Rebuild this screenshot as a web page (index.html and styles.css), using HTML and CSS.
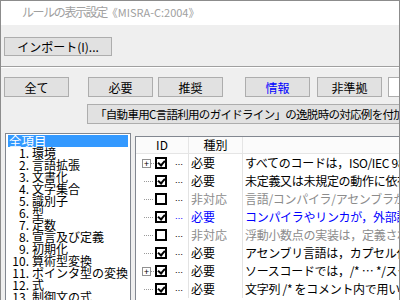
FILE: index.html
```html
<!DOCTYPE html>
<html lang="ja">
<head>
  <meta charset="UTF-8">
  <title>ルールの表示設定</title>
  <link rel="stylesheet" href="styles.css">
</head>
<body>
  <div class="window">
    <!-- Title bar -->
    <div class="titlebar">
      <span class="title-jp">ルールの表示設定</span><span class="title-en">《MISRA-C:2004》</span>
    </div>

    <div class="content">
      <!-- Import -->
      <div class="toolbar">
        <button class="btn btn-import">インポート(I)...</button>
      </div>
      <div class="separator"></div>

      <!-- Filter buttons -->
      <div class="filters">
        <button class="btn btn-filter">全て</button>
        <button class="btn btn-filter gap-wide">必要</button>
        <button class="btn btn-filter gap-small">推奨</button>
        <button class="btn btn-filter btn-info gap-wide">情報</button>
        <button class="btn btn-filter gap-small">非準拠</button>
        <div class="search"></div>
      </div>
      <div class="guide-row">
        <button class="btn btn-guide">「自動車用C言語利用のガイドライン」の逸脱時の対応例を付加する</button>
      </div>

      <!-- Main area -->
      <div class="main">
        <ul class="chapters">
          <li class="selected"><span class="label">全項目</span></li>
          <li><span class="num">1.</span>環境</li>
          <li><span class="num">2.</span>言語拡張</li>
          <li><span class="num">3.</span>文書化</li>
          <li><span class="num">4.</span>文字集合</li>
          <li><span class="num">5.</span>識別子</li>
          <li><span class="num">6.</span>型</li>
          <li><span class="num">7.</span>定数</li>
          <li><span class="num">8.</span>宣言及び定義</li>
          <li><span class="num">9.</span>初期化</li>
          <li><span class="num">10.</span>算術型変換</li>
          <li><span class="num">11.</span>ポインタ型の変換</li>
          <li><span class="num">12.</span>式</li>
          <li><span class="num">13.</span>制御文の式</li>
        </ul>

        <div class="rules">
          <div class="rules-head">
            <div class="col-id">ID</div>
            <div class="col-kind">種別</div>
            <div class="col-desc"></div>
          </div>

          <div class="rule">
            <div class="col-id"><span class="expander">+</span><span class="tree-line short"></span><span class="check on"></span><span class="more">…</span></div>
            <div class="col-kind">必要</div>
            <div class="col-desc">すべてのコードは，ISO/IEC 9899:1990 に準拠しなければならない</div>
          </div>
          <div class="rule">
            <div class="col-id"><span class="tree-line"></span><span class="check on"></span><span class="more">…</span></div>
            <div class="col-kind">必要</div>
            <div class="col-desc">未定義又は未規定の動作に依存してはならない</div>
          </div>
          <div class="rule off">
            <div class="col-id"><span class="tree-line"></span><span class="check"></span><span class="more">…</span></div>
            <div class="col-kind">非対応</div>
            <div class="col-desc">言語/コンパイラ/アセンブラが準拠する規格を文書化</div>
          </div>
          <div class="rule info">
            <div class="col-id"><span class="tree-line"></span><span class="check on"></span><span class="more">…</span></div>
            <div class="col-kind">必要</div>
            <div class="col-desc">コンパイラやリンカが，外部識別子の有効文字数</div>
          </div>
          <div class="rule off">
            <div class="col-id"><span class="tree-line"></span><span class="check"></span><span class="more">…</span></div>
            <div class="col-kind">非対応</div>
            <div class="col-desc">浮動小数点の実装は，定義された規格に従うこと</div>
          </div>
          <div class="rule">
            <div class="col-id"><span class="tree-line"></span><span class="check on"></span><span class="more">…</span></div>
            <div class="col-kind">必要</div>
            <div class="col-desc">アセンブリ言語は，カプセル化して隔離すること</div>
          </div>
          <div class="rule">
            <div class="col-id"><span class="expander">+</span><span class="tree-line short"></span><span class="check on"></span><span class="more">…</span></div>
            <div class="col-kind">必要</div>
            <div class="col-desc">ソースコードでは，/* … */スタイルのコメントのみ</div>
          </div>
          <div class="rule">
            <div class="col-id"><span class="tree-line"></span><span class="check on"></span><span class="more">…</span></div>
            <div class="col-kind">必要</div>
            <div class="col-desc">文字列 /* をコメント内で用いてはならない</div>
          </div>
        </div>
      </div>
    </div>
  </div>
</body>
</html>
```

FILE: styles.css
```css
/* General Styles */
* {
  box-sizing: border-box;
}

body {
  margin: 0;
  font-family: "Noto Sans CJK JP", "Noto Sans", sans-serif;
  font-size: 12px;
  color: #000;
  background-color: #ffffff;
}

.window {
  width: 400px;
  height: 300px;
  overflow: hidden;
  border: 1px solid #8c8c8c;
  border-bottom: none;
  background-color: #efefef;
}

/* Title bar */
.titlebar {
  height: 24px;
  padding-left: 21px;
  background-color: #ffffff;
  color: #a0a0a0; /* Inactive title */
  font-size: 12px;
  line-height: 22px;
  white-space: nowrap;
}

.title-jp {
  letter-spacing: -1.4px;
}

.title-en {
  font-size: 11px;
}

/* Buttons */
.btn {
  display: block;
  margin: 0;
  padding: 0;
  height: 20px;
  font-family: inherit;
  font-size: 12px;
  line-height: 17px;
  color: #000;
  background-color: #e1e1e1;
  border: 1px solid #adadad;
  border-radius: 0;
  white-space: nowrap;
}

.content {
  padding-left: 3px;
}

.toolbar {
  padding-top: 12px;
}

.btn-import {
  width: 108px;
  height: 19px;
}

.separator {
  margin: 10px 0 0 -3px;
  border-top: 1px solid #a0a0a0;
  border-bottom: 1px solid #ffffff;
}

/* Filters */
.filters {
  display: flex;
  margin-top: 9px;
}

.btn-filter {
  width: 65px;
}

.gap-wide {
  margin-left: 19px;
}

.gap-small {
  margin-left: 5px;
}

.filters .btn-info {
  margin-left: 22px;
  color: #0000ff;
}

.filters .btn-filter:last-of-type {
  margin-left: 7px;
}

.search {
  flex: 1;
  height: 20px;
  margin-left: 6px;
  background-color: #ffffff;
  border: 1px solid #adadad;
  border-right: none;
}

.guide-row {
  margin: 7px 0 0 83px;
  overflow: hidden;
}

.btn-guide {
  width: 400px;
  height: 20px;
  padding-left: 7px;
  text-align: left;
  font-size: 11.5px;
  letter-spacing: -0.7px;
}

/* Main area */
.main {
  display: flex;
  align-items: flex-start;
  margin-top: 9px;
}

.chapters {
  list-style: none;
  margin: 0 0 0 1px;
  padding: 1px 2px;
  width: 126px;
  height: 200px;
  font-size: 12px;
  background-color: #ffffff;
  border: 1px solid #828790;
}

.chapters li {
  height: 12px;
  line-height: 12px;
  padding-left: 24px;
  white-space: nowrap;
}

.chapters li.selected {
  padding-left: 0;
  background-color: #3399ff;
  color: #ffffff;
}

.chapters li.selected .label {
  padding-left: 1px;
  font-size: 12.5px;
}

.num {
  display: inline-block;
  width: 24px;
  margin-left: -24px;
  padding-right: 3px;
  text-align: right;
}

/* Rule list */
.rules {
  flex: 1;
  height: 200px;
  margin: 3px 0 0 4px;
  background-color: #ffffff;
  border: 1px solid #828790;
  border-right: none;
}

.rules-head,
.rule {
  display: grid;
  grid-template-columns: 53px 54px 1fr;
  white-space: nowrap;
}

.rules-head {
  height: 17px;
  line-height: 16px;
  background-color: #fbfbfb;
  border-bottom: 1px solid #e5e5e5;
}

.rules-head > div {
  text-align: center;
}

.rules-head .col-id,
.rules-head .col-kind {
  border-right: 1px solid #e5e5e5;
}

.rule {
  height: 18px;
  line-height: 18px;
}

.rule .col-id {
  display: flex;
  align-items: center;
  padding-left: 6px;
  border-right: 1px solid #e3e3e3;
}

.rule .col-kind {
  padding-left: 2px;
  border-right: 1px solid #e3e3e3;
}

.rule .col-desc {
  padding-left: 2px;
  overflow: hidden;
  letter-spacing: -0.3px;
}

.rule.off {
  color: #8c8c8c;
}

.rule.info {
  color: #0000ff;
}

/* Tree bits */
.expander {
  width: 9px;
  height: 9px;
  border: 1px solid #919191;
  font-size: 9px;
  line-height: 7px;
  text-align: center;
  color: #000;
  background-color: #ffffff;
}

.tree-line {
  width: 9px;
  height: 1px;
  margin-left: 2px;
  margin-right: 2px;
  border-top: 1px dotted #9a9a9a;
}

.tree-line.short {
  width: 3px;
  margin-left: 0;
  margin-right: 1px;
}

.check {
  position: relative;
  width: 12px;
  height: 12px;
  border: 2px solid #000;
  background-color: #ffffff;
}

.check.on::after {
  content: "";
  position: absolute;
  left: 2px;
  top: 0px;
  width: 3px;
  height: 5px;
  border-right: 2px solid #000;
  border-bottom: 2px solid #000;
  transform: rotate(40deg);
}

.more {
  margin-left: 8px;
  font-size: 8px;
  line-height: 8px;
  padding-top: 4px;
  color: #000;
}

.rule.info .more {
  color: #0000ff;
}
```
